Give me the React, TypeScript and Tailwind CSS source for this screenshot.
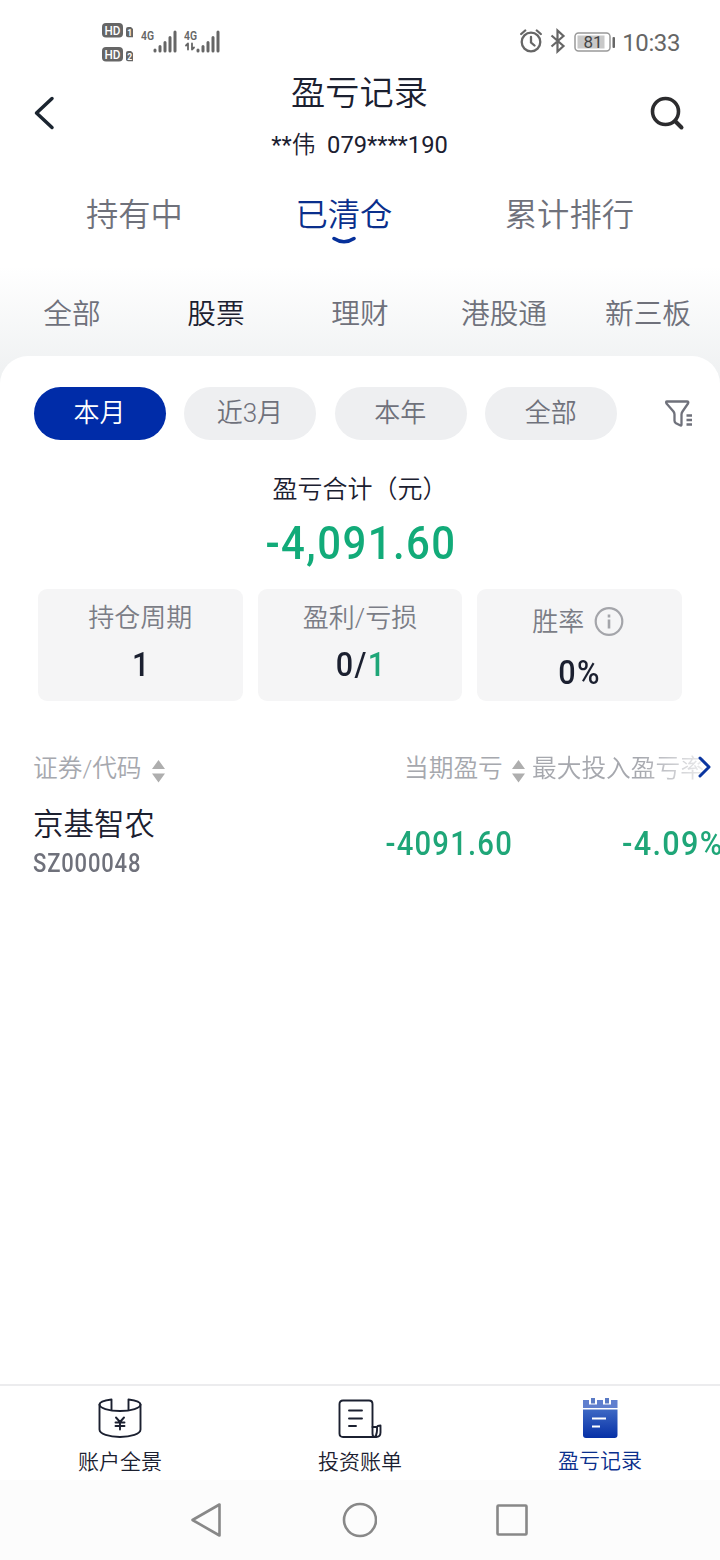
import type { ReactNode } from 'react'

const tabs = ['持有中', '已清仓', '累计排行']
const categories = ['全部', '股票', '理财', '港股通', '新三板']
const periods = ['本月', '近3月', '本年', '全部']

function SignalBars({ data }: { data?: boolean }) {
  return (
    <svg width="38" height="26" viewBox="0 0 38 26" fill="none" stroke="#666" strokeLinecap="round">
      <text x="0" y="12" fontSize="13.500" fontWeight="600" fill="#666" stroke="none" textLength="13" lengthAdjust="spacingAndGlyphs">
        4G
      </text>
      {data && <path d="M4 15.500v6M2 17.500l2-2M8 15.500v6M10 19.500l-2 2" strokeWidth="1.800" />}
      <path d="M14 22v1M19 18.500v4.500M24 14.500v8.500M29 9.500v13.500M34 4v19" strokeWidth="3" />
    </svg>
  )
}

function SimBadge({ slot }: { slot: number }) {
  return (
    <svg width="32" height="15" viewBox="0 0 32 15">
      <rect x="0" y="0" width="21" height="14.500" rx="4" fill="#666" />
      <text x="2.500" y="12" fontSize="13" fontWeight="500" fill="#fff" textLength="16" lengthAdjust="spacingAndGlyphs">
        HD
      </text>
      <path d="M26 4h3l2 2v8.300H26a2 2 0 0 1-2-2V6a2 2 0 0 1 2-2z" fill="#666" />
      <text x="25.300" y="12.500" fontSize="8.500" fontWeight="700" fill="#fff">
        {slot}
      </text>
    </svg>
  )
}

function StatusBar() {
  return (
    <div className="flex h-[66px] items-start justify-between pl-[102px] pr-10 text-[#666]">
      <div className="flex items-start">
        <div className="flex flex-col gap-[9px] pt-[23px]">
          <SimBadge slot={1} />
          <SimBadge slot={2} />
        </div>
        <div className="ml-[7px] flex gap-[5px] pt-[28px]">
          <SignalBars />
          <SignalBars data />
        </div>
      </div>
      <div className="flex items-center pt-[26px]">
        <svg className="-mt-[2px]" width="24" height="26" viewBox="0 0 24 26" fill="none" stroke="#666" strokeWidth="2.300" strokeLinecap="round">
          <circle cx="11" cy="14" r="9.300" />
          <path d="M11 9v5.500l3.500 3M1.200 6l4-3.500M20.800 6l-4-3.500" />
        </svg>
        <svg className="-mt-[2px] ml-1.5" width="16" height="26" viewBox="0 0 16 26" fill="none" stroke="#666" strokeWidth="2.200">
          <path d="M1.500 7.500l12 10.500-6 5.500v-21l6 5.500-12 10.500" />
        </svg>
        <svg className="ml-2" width="42" height="22" viewBox="0 0 42 22">
          <rect x="1" y="2" width="35" height="18" rx="3.500" fill="none" stroke="#999" strokeWidth="1.500" />
          <rect x="3.500" y="4.500" width="27" height="13" fill="#c8c8c8" />
          <rect x="38.500" y="6" width="2.500" height="11" rx="1" fill="#666" />
          <text x="9.500" y="17" fontSize="17" fontWeight="400" fill="#444" textLength="19">
            81
          </text>
        </svg>
        <span className="ml-[6px] mt-0.5 text-[24px] font-normal leading-[30px] tracking-[-0.400px]">10:33</span>
      </div>
    </div>
  )
}

function Header() {
  return (
    <header className="flex h-[104px] items-start justify-between pl-[34px] pr-[35px] text-[#1b2030]">
      <svg className="mt-[30px]" width="36" height="34" viewBox="0 0 36 34" fill="none" stroke="#1b2530" strokeWidth="3.500" strokeLinecap="round" strokeLinejoin="round">
        <path d="M18 2.500L2.500 17 18 31.500" />
      </svg>
      <div className="flex flex-col items-center pt-0.5">
        <h1 className="text-[34.200px] leading-[50px]">盈亏记录</h1>
        <p className="mt-[9px] text-[23.700px] leading-9">
          <span className="font-normal">**</span>伟<span className="font-normal">&nbsp; 079****190</span>
        </p>
      </div>
      <svg className="mt-[30px]" width="36" height="36" viewBox="0 0 36 36" fill="none" stroke="#2c2c2e" strokeLinecap="round">
        <circle cx="16.500" cy="15.500" r="13" strokeWidth="3.600" />
        <path d="M26.500 25.500l6 6" strokeWidth="4" />
      </svg>
    </header>
  )
}

function TabBar() {
  return (
    <nav className="flex h-[90px] justify-between px-[86px] pt-[21px] text-[32.300px] leading-[48px] text-[#6f717b]">
      {tabs.map((tab, i) => (
        <div key={tab} className={i === 1 ? 'flex flex-col items-center text-[#0a2f8c]' : ''}>
          {tab}
          {i === 1 && (
            <svg className="-mt-[3px]" width="26" height="10" viewBox="0 0 26 10" fill="none" stroke="#06309a" strokeWidth="3.500" strokeLinecap="round">
              <path d="M3 2.500q10 6.500 20 0" />
            </svg>
          )}
        </div>
      ))}
    </nav>
  )
}

function CategoryBar() {
  return (
    <nav className="grid h-[128px] grid-cols-5 bg-linear-to-b from-white from-5% to-[#eff1f2] to-90% pt-8 text-center text-[28.700px] leading-[44px] text-[#6f717b]">
      {categories.map((name) => (
        <span key={name} className={name === '股票' ? 'text-[#1b2030]' : ''}>
          {name}
        </span>
      ))}
    </nav>
  )
}

function PeriodFilter() {
  return (
    <div className="flex items-center pl-[34px]">
      <div className="flex gap-[18.400px]">
        {periods.map((p, i) => (
          <button
            key={p}
            className={`h-[53px] w-[132px] rounded-full pr-px text-[26px] ${
              i === 0 ? 'bg-[#002ca8] text-white' : 'bg-[#eeeff1] text-[#6f717b]'
            }`}
          >
            {p}
          </button>
        ))}
      </div>
      <svg className="ml-[47px]" width="30" height="30" viewBox="0 0 30 30" fill="none" stroke="#6f717b" strokeWidth="2.300" strokeLinejoin="round">
        <path d="M3 2.500h20q2 0 1 2l-5.500 8q-1 1.500-1 3v10q0 1.500-1.500.8l-4-2q-1.500-1-1.500-2.500V15.500q0-1.500-1-3l-7-8q-1-2 .5-2z" />
        <path d="M22.500 16.500H28M22.500 21H28M22.500 25.500H28" />
      </svg>
    </div>
  )
}

function StatCard({ label, tall, children }: { label: ReactNode; tall?: boolean; children: ReactNode }) {
  return (
    <div className="flex h-[112px] flex-col items-center rounded-[9px] bg-[#f5f5f6]">
      <div className={`flex items-center text-[26px] leading-9 text-[#7b7d86] ${tall ? 'pt-[15px] pr-[3px]' : 'pt-[11px]'}`}>
        {label}
      </div>
      <div
        className={`scale-x-[.9] text-[34px] font-medium leading-10 tracking-[1.500px] text-[#1b2030] ${
          tall ? 'mt-[12px]' : 'mt-[8px] pl-[2px]'
        }`}
      >
        {children}
      </div>
    </div>
  )
}

function SortIcon() {
  return (
    <svg width="15" height="24" viewBox="0 0 15 24" fill="#aeaeae">
      <path d="M7.500 0L14 9H1zM7.500 22.500L14 13.500H1z" />
    </svg>
  )
}

function RecordTable() {
  return (
    <section className="mt-[48px] overflow-hidden">
      <div className="flex h-10 items-center whitespace-nowrap text-[24.700px] leading-10 text-[#a6a8ae]">
        <div className="flex w-[404px] items-center pl-[33px]">
          证券/代码
          <span className="ml-[9px] mt-1.5">
            <SortIcon />
          </span>
        </div>
        <div className="flex w-[128px] items-center">
          当期盈亏
          <span className="ml-[8px] mt-1.5">
            <SortIcon />
          </span>
        </div>
        <div className="relative w-[188px] shrink-0">
          <div className="w-[180px] mask-r-from-60% mask-r-to-105%">最大投入盈亏率</div>
          <svg className="absolute right-[8px] top-[6px]" width="16" height="24" viewBox="0 0 16 24" fill="none" stroke="#0a35a0" strokeWidth="3" strokeLinecap="round" strokeLinejoin="round">
            <path d="M4 3l9 9-9 9" />
          </svg>
        </div>
      </div>
      <div className="mt-[11px] flex h-[86px] items-center whitespace-nowrap">
        <div className="w-[300px] pl-[33px]">
          <div className="text-[30.500px] leading-[42px] text-[#1b2030]">京基智农</div>
          <div className="origin-left scale-x-[.88] text-[25px] font-medium leading-[36px] tracking-[.950px] text-[#6f717b]">
            SZ000048
          </div>
        </div>
        <div className="w-[213px] origin-right scale-x-[.86] text-right text-[34px] font-medium tracking-[1.400px] text-[#1fa678]">
          -4091.60
        </div>
        <div className="w-[207px] pl-[109px]">
          <div className="w-[98px] origin-left scale-x-[.9] text-[34px] font-medium tracking-[1.500px] text-[#1fa678]">-4.09%</div>
        </div>
      </div>
    </section>
  )
}

function AccountIcon() {
  return (
    <svg width="44" height="44" viewBox="0 0 44 44" fill="none" stroke="#1b2030" strokeWidth="1.900" strokeLinejoin="round" strokeLinecap="round">
      <path d="M13.500 14V3.500C6 4.500 1.500 6 1.500 8.500v25C1.500 38 11 41 22 41s20.500-3 20.500-7.500v-25C42.500 6 38 4.500 30.500 3.500V14" />
      <path d="M1.500 8.500c0 3.500 9 6.500 20.500 6.500s20.500-3 20.500-6.500" />
      <path d="M18 21.500L22 26l4-4.500M17.500 26.500h9M17.500 30h9M22 26v7.500" />
    </svg>
  )
}

function BillIcon() {
  return (
    <svg width="44" height="44" viewBox="0 0 44 44" fill="none" stroke="#1b2030" strokeWidth="1.900" strokeLinejoin="round" strokeLinecap="round">
      <path d="M38 41H5Q1.500 41 1.500 37.500V8Q1.500 4.500 5 4.500h26Q34.500 4.500 34.500 8v29.500q0 3.500 2.500 3.500" />
      <path d="M34.500 31h4.500q.5 6.500-2 10h1q4.500 0 4.500-4.500v-7q-3 0-3.500 1.500" />
      <path d="M11 14.500h13M11 22.500h13M11 30h7" />
    </svg>
  )
}

function RecordIcon() {
  return (
    <svg width="44" height="44" viewBox="0 0 44 44">
      <defs>
        <linearGradient id="rec" x1="0" y1="0" x2="0" y2="1">
          <stop offset="0" stopColor="#3d68c4" />
          <stop offset="1" stopColor="#0630a6" />
        </linearGradient>
      </defs>
      <path d="M5 4h6v4.500h8V4h6v4.500h8V4h6.500v8H5z" fill="#607fce" />
      <path d="M13 2h4v5.500h-4zM27 2h4v5.500h-4z" fill="#5a7ac4" />
      <path d="M5 13.500h34.500V39q0 3-3 3H8q-3 0-3-3z" fill="url(#rec)" />
      <path d="M14 22.500h14M14 30.500h8" stroke="#fff" strokeWidth="2" />
    </svg>
  )
}

function BottomNav() {
  const items = [
    { label: '账户全景', icon: <AccountIcon /> },
    { label: '投资账单', icon: <BillIcon /> },
    { label: '盈亏记录', icon: <RecordIcon />, active: true },
  ]
  return (
    <footer className="grid h-[96px] grid-cols-3 border-t-2 border-[#ececee] bg-white">
      {items.map((item) => (
        <div
          key={item.label}
          className={`flex flex-col items-center pt-[10px] text-[21px] leading-[30px] ${
            item.active ? 'text-[#0a2f8c]' : 'text-[#1b2030]'
          }`}
        >
          {item.icon}
          <span className={item.active ? 'mt-[6px]' : 'mt-[7px]'}>{item.label}</span>
        </div>
      ))}
    </footer>
  )
}

function SystemNav() {
  return (
    <div className="flex h-20 items-center justify-between bg-[#fcfcfc] pl-[190px] pr-[191px]">
      <svg width="32" height="36" viewBox="0 0 32 36" fill="none" stroke="#888" strokeWidth="2.600" strokeLinejoin="round">
        <path d="M2.500 18L29.500 2.500v31z" />
      </svg>
      <svg width="36" height="36" viewBox="0 0 36 36" fill="none" stroke="#888" strokeWidth="2.600">
        <circle cx="19" cy="18" r="16" />
      </svg>
      <svg width="34" height="34" viewBox="0 0 34 34" fill="none" stroke="#888" strokeWidth="2.600">
        <rect x="2.500" y="2.500" width="29" height="29" rx="1" />
      </svg>
    </div>
  )
}

export default function App() {
  return (
    <div className="flex h-[1560px] w-[720px] flex-col overflow-hidden bg-white font-[Roboto,'Noto_Sans_CJK_SC',sans-serif] font-[350]">
      <StatusBar />
      <Header />
      <TabBar />
      <CategoryBar />
      <main className="-mt-8 flex-1 rounded-t-[28px] bg-white pt-[31px]">
        <PeriodFilter />
        <section className="flex flex-col items-center pt-8">
          <h2 className="text-[25px] leading-9 text-[#1b2030]">盈亏合计（元）</h2>
          <p className="mt-[5px] scale-x-[.91] pl-px text-[46px] font-medium leading-[60px] tracking-[1.600px] text-[#12ab79]">-4,091.60</p>
        </section>
        <section className="mt-4 grid grid-cols-3 gap-[15px] px-[38px]">
          <StatCard label="持仓周期">1</StatCard>
          <StatCard label="盈利/亏损">
            0/<span className="text-[#1fa678]">1</span>
          </StatCard>
          <StatCard
            tall
            label={
              <>
                胜率
                <svg className="ml-[10px]" width="30" height="30" viewBox="0 0 30 30" fill="none" stroke="#a4a5aa" strokeWidth="2.200">
                  <circle cx="15" cy="14.500" r="13.300" />
                  <path d="M15 12.500v9M15 7.500v3" strokeWidth="2.600" />
                </svg>
              </>
            }
          >
            0%
          </StatCard>
        </section>
        <RecordTable />
      </main>
      <BottomNav />
      <SystemNav />
    </div>
  )
}
